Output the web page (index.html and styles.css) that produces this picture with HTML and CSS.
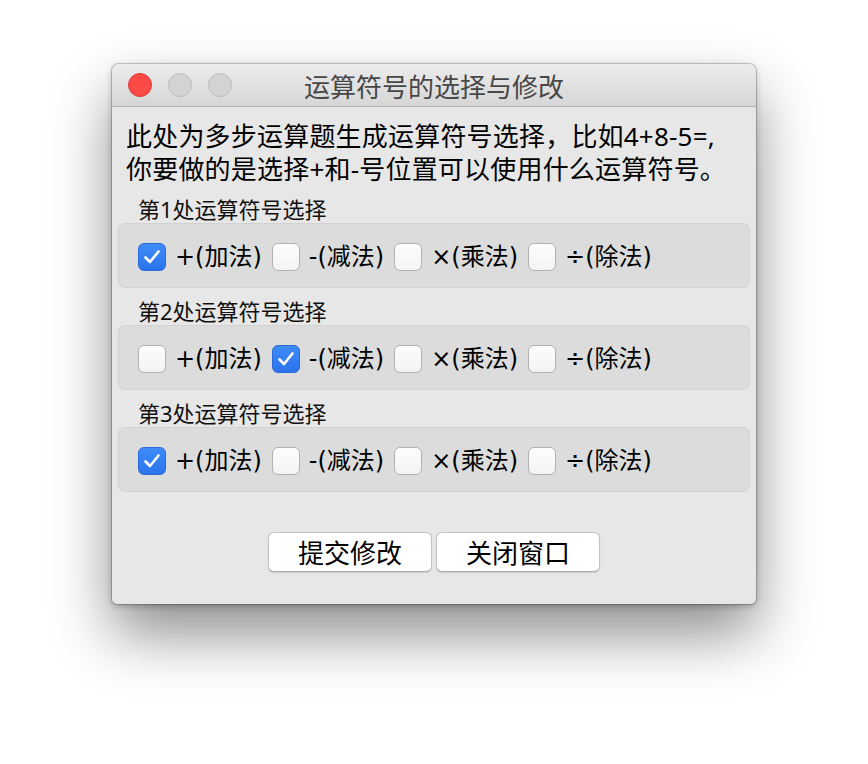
FILE: index.html
```html
<!DOCTYPE html>
<html lang="zh-CN">
<head>
<meta charset="utf-8">
<title>运算符号的选择与修改</title>
<link rel="stylesheet" href="styles.css">
</head>
<body>
<div class="desk">
  <div class="window">
    <div class="titlebar">
      <div class="lights">
        <span class="light close"></span>
        <span class="light"></span>
        <span class="light"></span>
      </div>
      <div class="title">运算符号的选择与修改</div>
    </div>
    <div class="content">
      <p class="intro">此处为多步运算题生成运算符号选择，比如4+8-5=,<br>你要做的是选择+和-号位置可以使用什么运算符号。</p>

      <div class="label">第1处运算符号选择</div>
      <div class="group">
        <label class="opt"><span class="cb on"><svg viewBox="0 0 28 28"><path d="M7.5 14.5 L12 19 L20.5 8.5"/></svg></span><span class="txt">+(加法)</span></label>
        <label class="opt"><span class="cb"></span><span class="txt">-(减法)</span></label>
        <label class="opt"><span class="cb"></span><span class="txt">×(乘法)</span></label>
        <label class="opt"><span class="cb"></span><span class="txt">÷(除法)</span></label>
      </div>

      <div class="label">第2处运算符号选择</div>
      <div class="group">
        <label class="opt"><span class="cb"></span><span class="txt">+(加法)</span></label>
        <label class="opt"><span class="cb on"><svg viewBox="0 0 28 28"><path d="M7.5 14.5 L12 19 L20.5 8.5"/></svg></span><span class="txt">-(减法)</span></label>
        <label class="opt"><span class="cb"></span><span class="txt">×(乘法)</span></label>
        <label class="opt"><span class="cb"></span><span class="txt">÷(除法)</span></label>
      </div>

      <div class="label">第3处运算符号选择</div>
      <div class="group">
        <label class="opt"><span class="cb on"><svg viewBox="0 0 28 28"><path d="M7.5 14.5 L12 19 L20.5 8.5"/></svg></span><span class="txt">+(加法)</span></label>
        <label class="opt"><span class="cb"></span><span class="txt">-(减法)</span></label>
        <label class="opt"><span class="cb"></span><span class="txt">×(乘法)</span></label>
        <label class="opt"><span class="cb"></span><span class="txt">÷(除法)</span></label>
      </div>

      <div class="buttons">
        <button class="btn">提交修改</button>
        <button class="btn">关闭窗口</button>
      </div>
    </div>
  </div>
</div>
</body>
</html>
```

FILE: styles.css
```css
html, body {
  margin: 0;
  padding: 0;
  background: #ffffff;
}
body {
  font-family: "Noto Sans", "Noto Sans CJK SC", sans-serif;
  font-weight: normal;
  color: #000;
}
.desk {
  width: 868px;
  height: 764px;
  padding: 64px 0 0 112px;
  box-sizing: border-box;
}
.window {
  width: 644px;
  height: 540px;
  box-sizing: border-box;
  background: #e7e7e7;
  border-radius: 7px 7px 5px 5px;
  box-shadow: 0 0 0 1px rgba(0,0,0,0.18), 0 2px 6px rgba(0,0,0,0.25), 0 30px 60px rgba(0,0,0,0.45);
  overflow: hidden;
  display: flex;
  flex-direction: column;
}
.titlebar {
  height: 43px;
  box-sizing: border-box;
  border-bottom: 1px solid #b3b3b3;
  background: linear-gradient(#ececec, #d6d6d6);
  display: flex;
  align-items: center;
  position: relative;
}
.lights {
  display: flex;
  gap: 16px;
  padding-left: 16px;
}
.light {
  width: 24px;
  height: 24px;
  box-sizing: border-box;
  border-radius: 50%;
  background: #d3d3d3;
  border: 1px solid #bdbdbd;
}
.light.close {
  background: #fc4a46;
  border-color: #df3a36;
}
.title {
  position: absolute;
  left: 0;
  right: 0;
  top: 0;
  bottom: 0;
  display: flex;
  align-items: center;
  justify-content: center;
  font-family: "Noto Sans CJK SC", sans-serif;
  font-size: 26px;
  color: #474747;
  pointer-events: none;
}
.content {
  flex: 1;
  padding: 13px 6px 0 6px;
  display: flex;
  flex-direction: column;
}
.intro {
  margin: 0;
  padding-left: 8px;
  font-size: 26px;
  line-height: 33px;
  letter-spacing: 0.2px;
  color: #000;
  white-space: nowrap;
}
.label {
  margin-top: 10px;
  padding-left: 20px;
  font-size: 22px;
  line-height: 27px;
  color: #111;
}
.group {
  height: 65px;
  box-sizing: border-box;
  background: #dcdcdc;
  border: 1px solid #d2d2d2;
  border-radius: 7px;
  display: flex;
  align-items: center;
  padding-left: 19px;
  padding-top: 2px;
  gap: 10px;
}
.opt {
  display: flex;
  align-items: center;
  gap: 9px;
}
.cb {
  width: 28px;
  height: 28px;
  box-sizing: border-box;
  border-radius: 6px;
  background: linear-gradient(#fdfdfd, #f3f3f3);
  border: 1px solid #b1b1b1;
  display: flex;
  align-items: center;
  justify-content: center;
}
.cb.on {
  background: linear-gradient(#3e8cf8, #2a72ea);
  border-color: #2a6ad8;
}
.cb svg {
  width: 28px;
  height: 28px;
  flex: none;
}
.cb path {
  fill: none;
  stroke: #ffffff;
  stroke-width: 2.6;
  stroke-linecap: round;
  stroke-linejoin: round;
}
.txt {
  font-family: "DejaVu Sans", "Noto Sans CJK SC", sans-serif;
  font-size: 24px;
  line-height: 28px;
  color: #000;
}
.buttons {
  margin-top: 40px;
  display: flex;
  justify-content: center;
  gap: 4px;
}
.btn {
  width: 164px;
  height: 40px;
  box-sizing: border-box;
  background: #ffffff;
  border: 1px solid #c3c3c3;
  border-bottom-color: #a9a9a9;
  border-radius: 6px;
  box-shadow: 0 1px 1px rgba(0,0,0,0.12);
  font-family: "Noto Sans CJK SC", sans-serif;
  font-weight: normal;
  font-size: 26px;
  line-height: 36px;
  color: #000;
  padding: 0;
}
```
